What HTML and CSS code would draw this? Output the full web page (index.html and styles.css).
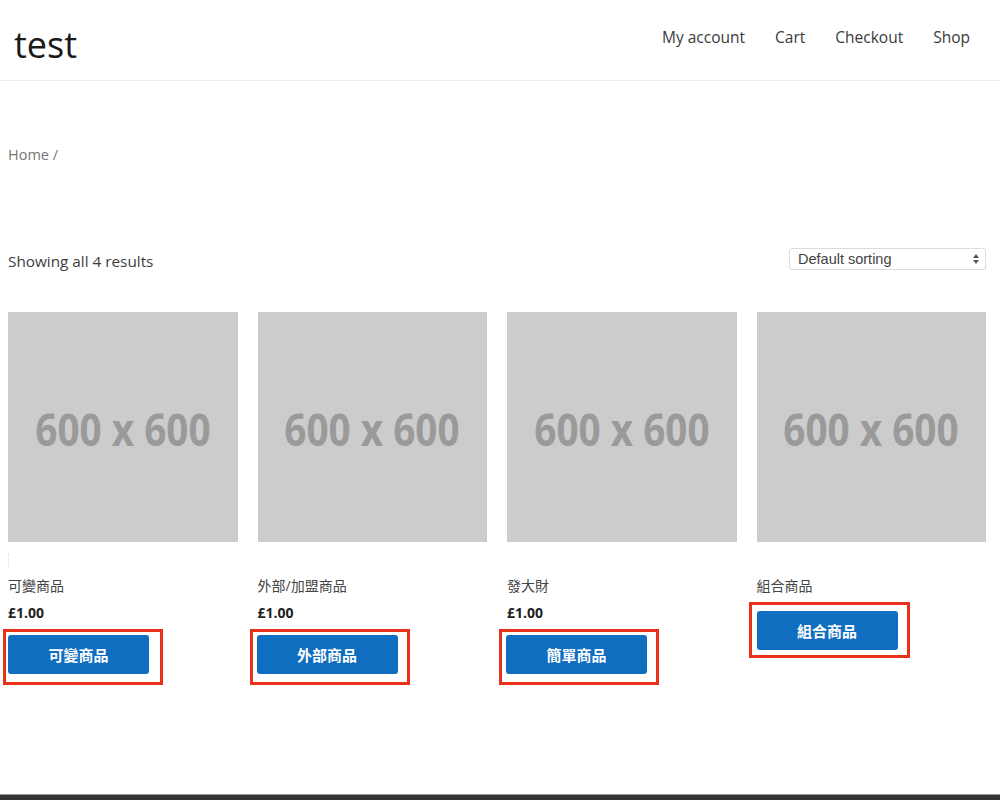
FILE: index.html
```html
<!DOCTYPE html>
<html lang="zh-Hant">
<head>
<meta charset="utf-8">
<title>test</title>
<link rel="stylesheet" href="styles.css">
</head>
<body>
<header class="site-header">
  <div class="site-title">test</div>
  <nav class="main-nav">
    <a href="#">My account</a>
    <a href="#">Cart</a>
    <a href="#">Checkout</a>
    <a href="#">Shop</a>
  </nav>
</header>
<main class="content">
  <div class="breadcrumb">Home / </div>
  <div class="toolbar">
    <p class="result-count">Showing all 4 results</p>
    <div class="ordering">
      <span>Default sorting</span>
      <svg class="arrows" width="8" height="12" viewBox="0 0 8 12"><path d="M4 1 L7 5 H1 Z M4 11 L1 7 H7 Z" fill="#555"/></svg>
    </div>
  </div>
  <ul class="products">
    <li class="product">
      <div class="thumb"><span>600 x 600</span></div>
      <div class="rating"></div>
      <h2 class="title">可變商品</h2>
      <div class="price">£1.00</div>
      <div class="mark"><a class="button" href="#">可變商品</a></div>
    </li>
    <li class="product">
      <div class="thumb"><span>600 x 600</span></div>
      <div class="rating blank"></div>
      <h2 class="title">外部/加盟商品</h2>
      <div class="price">£1.00</div>
      <div class="mark mark-wide"><a class="button" href="#">外部商品</a></div>
    </li>
    <li class="product">
      <div class="thumb"><span>600 x 600</span></div>
      <div class="rating blank"></div>
      <h2 class="title">發大財</h2>
      <div class="price">£1.00</div>
      <div class="mark mark-wide"><a class="button" href="#">簡單商品</a></div>
    </li>
    <li class="product">
      <div class="thumb"><span>600 x 600</span></div>
      <div class="rating blank"></div>
      <h2 class="title">組合商品</h2>
      <div class="mark mark-alt"><a class="button" href="#">組合商品</a></div>
    </li>
  </ul>
</main>
<footer class="site-footer"></footer>
</body>
</html>
```

FILE: styles.css
```css
html, body {
  margin: 0;
  padding: 0;
}
body {
  background: #fff;
  color: #333;
  font-family: "Open Sans", "Noto Sans CJK TC", sans-serif;
  min-height: 100vh;
  display: flex;
  flex-direction: column;
}
.site-header {
  height: 80px;
  border-bottom: 1px solid #ececec;
  display: flex;
  justify-content: space-between;
  align-items: flex-start;
}
.site-title {
  font-size: 36px;
  color: #1a1a1a;
  padding-left: 14px;
  margin-top: 21px;
  line-height: 48px;
}
.main-nav {
  display: flex;
  gap: 30px;
  padding-right: 30px;
  margin-top: 26px;
}
.main-nav a {
  color: #3a3a3a;
  text-decoration: none;
  font-size: 15.5px;
  line-height: 22px;
}
.content {
  padding: 0 14px 0 8px;
}
.breadcrumb {
  margin-top: 64px;
  font-size: 14.5px;
  line-height: 20px;
  color: #767676;
}
.toolbar {
  margin-top: 83px;
  display: flex;
  justify-content: space-between;
  align-items: center;
  height: 22px;
}
.result-count {
  margin: 3px 0 0;
  font-size: 15.3px;
  color: #3d3d3d;
  line-height: 22px;
}
.ordering {
  width: 197px;
  height: 22px;
  box-sizing: border-box;
  border: 1px solid #dcdcdc;
  border-radius: 3px;
  display: flex;
  align-items: center;
  justify-content: space-between;
  padding: 0 5px 0 8px;
  font-family: "Liberation Sans", sans-serif;
  font-size: 14.5px;
  color: #444;
  background: #fff;
}
.products {
  list-style: none;
  margin: 42px 0 0;
  padding: 0;
  display: grid;
  grid-template-columns: repeat(4, minmax(0, 1fr));
  column-gap: 20px;
}
.thumb {
  height: 230px;
  background: #cccccc;
  display: flex;
  align-items: center;
  justify-content: center;
  overflow: hidden;
}
.thumb span {
  font-family: "Open Sans", sans-serif;
  font-weight: bold;
  font-size: 45px;
  color: #9a9a9a;
  white-space: nowrap;
  transform: scaleX(0.86);
  margin-top: 2px;
}
.rating {
  height: 14px;
  margin-top: 12px;
  width: 2px;
  border-left: 1px dotted #e2e2e2;
}
.rating.blank {
  border-left: none;
}
.title {
  margin: 8px 0 0;
  font-size: 14px;
  font-weight: normal;
  color: #444;
  line-height: 20px;
}
.price {
  margin-top: 7px;
  font-size: 14px;
  font-weight: bold;
  color: #222;
  line-height: 20px;
}
.product {
  display: flex;
  flex-direction: column;
  align-items: flex-start;
}
.product .thumb {
  align-self: stretch;
}
.mark {
  border: 3px solid #e8311a;
  padding: 3px 11px 8px 2px;
  margin: 6px 0 0 -5px;
}
.mark-wide {
  margin-left: -8px;
  padding: 3px 9px 8px 4px;
}
.mark-alt {
  margin: 6px 0 0 -8px;
  padding: 6px 9px 5px 5px;
}
.button {
  display: flex;
  align-items: center;
  justify-content: center;
  width: 141px;
  height: 39px;
  background: #0f6ebf;
  color: #fff;
  border-radius: 3px;
  text-decoration: none;
  font-weight: bold;
  font-size: 15px;
  font-family: "Noto Sans CJK TC", sans-serif;
}
.site-footer {
  margin-top: auto;
  height: 5px;
  border-top: 1px solid #9a9a9a;
  background: #333;
}
```
